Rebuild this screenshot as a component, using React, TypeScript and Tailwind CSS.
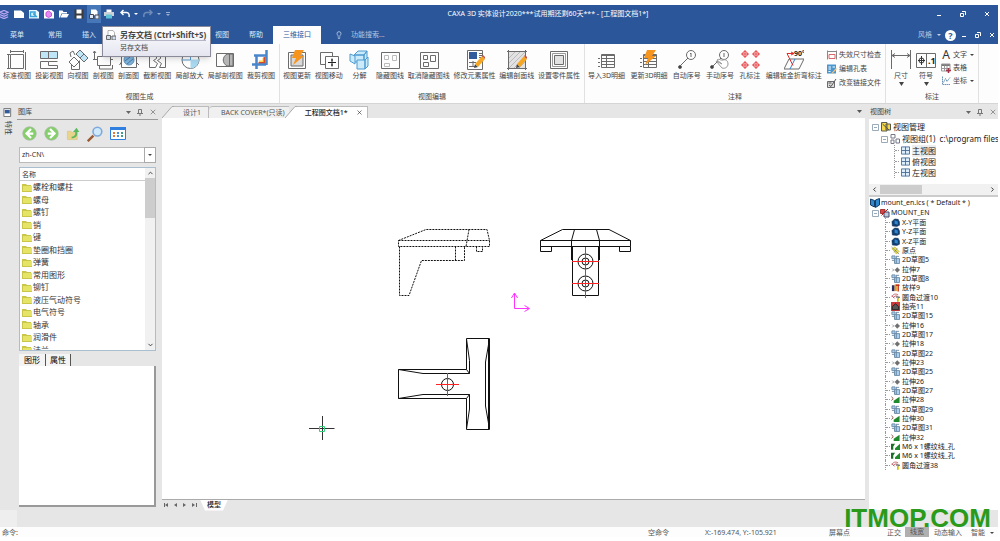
import React from 'react';
import { ChevronDown, ChevronLeft, ChevronRight, ChevronUp, Lightbulb, X } from 'lucide-react';

interface IconProps {
  children: React.ReactNode;
  className?: string;
}

const Icon: React.FC<IconProps> = ({ children, className = 'size-5' }) => (
  <svg viewBox="0 0 20 20" fill="none" stroke="#6b6b6b" className={`shrink-0 ${className}`} aria-hidden="true">
    {children}
  </svg>
);

const Bolt = () => <path d="M8 0h9l-4 6h4L6 15l3-7H5z" fill="#f7941d" stroke="none" />;
const Pencil = () => (
  <g stroke="none">
    <path d="M9 18l1-4 3 3z" fill="#444" />
    <path d="M10 14l7-8 3 3-7 8z" fill="#f5a623" />
    <path d="M17 6l1-1 3 3-1 1z" fill="#c0504d" />
  </g>
);

interface Tool {
  label: string;
  icon: React.ReactNode;
  wide?: boolean;
}

const viewTools: Tool[] = [
  { label: '标准视图', icon: <path d="M3.500 4.500h13v14h-13zM3.500 1.500h13M3.500 0v3M16.500 0v3M0 4.500h3M0 18.500h3M1.500 4v15M18.500 2v18" /> },
  {
    label: '投影视图',
    icon: <><path d="M1.500 1.500h8v7h-8zM9.500 1.500h9v7h-9z" fill="#bfe6f7" /><path d="M1.500 11.500h8v4h9v3h-17zM9.500 11.500h9" /></>,
  },
  {
    label: '向视图',
    icon: <><path d="M8 4l4-4 8 8-4 4z" fill="#bfe6f7" /><path d="M12 8l4-4M1 12l5-5 5 5-5 5zM3.500 14.500v5h8v-9M2 3l3-2 2 4M2 3l1 4" /></>,
  },
  { label: '剖视图', icon: <path d="M4.500 6.500h13v9h-13zM0 9.500h4M17 9.500h3M1.500 1v8M0 3l1.500-2L3 3M6.500 15v4h13v-4" /> },
  {
    label: '剖面图',
    icon: <><path d="M2.500 2.500h15v15h-15zM2.500 12l-2 3M17 12l3 3" /><circle cx="10" cy="10" r="5" fill="#7fb4dc" stroke="#5f8fb9" /><path d="M6 11l5-4M8 14l6-5" stroke="#4c7ba6" /></>,
  },
  { label: '截断视图', icon: <path d="M2.500 3.500h7v5l-3 2 4 3-2 4h-6zM18.500 3.500h-5v5l-3 2 4 3-2 4h6z" /> },
  {
    label: '局部放大',
    icon: <><circle cx="10.500" cy="10" r="8.500" fill="#fff" /><path d="M10.500 1.500v17a8.500 8.500 0 008.500-9h-8.500z" fill="#a9d8f1" stroke="none" /><path d="M10.500 2v8H2M0 5h5" stroke="#5a9bd0" /></>,
  },
  {
    label: '局部剖视图',
    icon: <><path d="M1.500 3.500h17v13h-17z" /><path d="M18 4v12h-6c-5-3-5-9 0-12z" fill="#b5b5b5" /><path d="M14.500 4v12" /></>,
  },
  {
    label: '裁剪视图',
    icon: <><path d="M8 11.500h4.500V8" stroke="#ffd24d" strokeWidth="2" /><path d="M7.500 13h6V7" stroke="#d94a2b" strokeWidth="2" /><path d="M3 5.500h13M5.500 5v14M15.500 0v15M1 14.500h14" stroke="#4a86cc" strokeWidth="2.500" /></>,
  },
];

const editTools: Tool[] = [
  { label: '视图更新', icon: <><path d="M1.500 2.500h17v16h-17z" /><path d="M4 5h12v11H4z" fill="#d8d8d8" /><Bolt /></> },
  { label: '视图移动', icon: <><path d="M1.500 2.500h12v12h-12z" /><path d="M6.500 6.500h13v12h-13z" fill="#fff" /><path d="M13 8.500v8M9 12.500h8M12 10h2M12 15h2" stroke="#222" /></> },
  {
    label: '分解',
    wide: true,
    icon: <g stroke="#4b9bd0" fill="#cbeafa"><path d="M5 5l4-4h9l-3 4zM15 5l3-4v8l-3 3zM5 5h10v7H5z" /><path d="M1 4l5 2v8l-5-3zM8 10h8v9H8zM16 10l3-3v9l-3 3z" /></g>,
  },
  { label: '隐藏图线', icon: <><path d="M1.500 2.500h18v16h-18z" /><path d="M4.500 5.500h4v4h-4zM12.500 5.500h4v5h-4zM4.500 13.500h5v3h-5z" stroke="#bbb" /></> },
  { label: '取消隐藏图线', icon: <><path d="M1.500 2.500h18v16h-18z" /><path d="M4.500 5.500h4v4h-4zM11.500 5.500h5v6h-5zM4.500 12.500h5v4h-5z" /></> },
  {
    label: '修改元素属性',
    icon: <><path d="M2.500.5h15v19h-15z" /><path d="M4 2h8v7H4z" fill="#315b9a" stroke="none" /><path d="M14 3.500h3M14 5.500h3M14 7.500h3M4 12.500h7M4 16.500h6M8 11v6" /><Pencil /></>,
  },
  {
    label: '编辑剖面线',
    icon: <><path d="M1.500 1.500h17v17h-17z" fill="#e2e2e2" /><path d="M2 8l6-6M2 13L13 2M2 18L18 2M7 18L18 7M12 18l6-6" stroke="#bbb" /><path d="M0 1.500h20M1.500 0v20M0 18.500h20M18.500 0v20" /><Pencil /></>,
  },
  { label: '设置零件属性', icon: <><path d="M1.500 1.500h17v17h-17z" /><path d="M3.500 3.500h13v13h-13z" stroke="#999" /><path d="M5.500 5.500h9v9h-9z" fill="#e2e2e2" /></> },
];

const TableLines = () => <path d="M4.500 4.500h13v13h-13zM4 8.500h14M4 11.500h14M4 14.500h14M9.500 5v13M1 8.500h2M1 12.500h2M1 16.500h2M4 5.500h13" />;

const noteTools: Tool[] = [
  { label: '导入3D明细', icon: <TableLines /> },
  { label: '更新3D明细', icon: <><TableLines /><Bolt /></> },
  { label: '自动序号', icon: <><circle cx="14" cy="5" r="4.500" /><path d="M11 8l-8 8M14 3v4M13 4l1-1" /><circle cx="3" cy="17" r="1.500" fill="#333" /></> },
  {
    label: '手动序号',
    icon: <><circle cx="14" cy="5" r="4.500" /><path d="M11 8l-8 8M14 3v4" /><circle cx="2" cy="17" r="1.500" fill="#333" /><path d="M6 11l6 3-5-4c2-2 4 1 6 0 3-1 5 1 5 4s-3 5-6 4z" fill="#fff" stroke="#999" /></>,
  },
  {
    label: '孔标注',
    icon: (
      <g stroke="#e8484c">
        {[[5, 4], [16, 4], [5, 15], [16, 15]].map(([x, y]) => (
          <g key={`${x}-${y}`}><circle cx={x} cy={y} r="2.500" /><path d={`M${x - 4} ${y}h8M${x} ${y - 4}v8`} /></g>
        ))}
      </g>
    ),
  },
  {
    label: '编辑钣金折弯标注',
    icon: (
      <>
        <path d="M5 9h15l-5 10H0z" />
        <path d="M11 9L6 19" stroke="#2f80d8" />
        <path d="M10 3.500H3l6 12M7 2l3 1.500L7 5" stroke="#e02b2b" />
        <text x="10" y="6" fontSize="7" fontWeight="700" fill="#222" stroke="none">90°</text>
      </>
    ),
  },
];

const categories = ['螺栓和螺柱', '螺母', '螺钉', '销', '键', '垫圈和挡圈', '弹簧', '常用图形', '铆钉', '液压气动符号', '电气符号', '轴承', '润滑件', '法兰'];

type NodeKind = 'plane' | 'origin' | 'sketch' | 'extrude' | 'loft' | 'fillet' | 'shell' | 'cut' | 'thread';

const features: { name: string; kind: NodeKind }[] = [
  { name: 'X-Y平面', kind: 'plane' },
  { name: 'Y-Z平面', kind: 'plane' },
  { name: 'X-Z平面', kind: 'plane' },
  { name: '原点', kind: 'origin' },
  { name: '2D草图5', kind: 'sketch' },
  { name: '拉伸7', kind: 'extrude' },
  { name: '2D草图8', kind: 'sketch' },
  { name: '放样9', kind: 'loft' },
  { name: '圆角过渡10', kind: 'fillet' },
  { name: '抽壳11', kind: 'shell' },
  { name: '2D草图15', kind: 'sketch' },
  { name: '拉伸16', kind: 'extrude' },
  { name: '2D草图17', kind: 'sketch' },
  { name: '拉伸18', kind: 'extrude' },
  { name: '2D草图22', kind: 'sketch' },
  { name: '拉伸23', kind: 'extrude' },
  { name: '2D草图25', kind: 'sketch' },
  { name: '拉伸26', kind: 'extrude' },
  { name: '2D草图27', kind: 'sketch' },
  { name: '拉伸28', kind: 'cut' },
  { name: '2D草图29', kind: 'sketch' },
  { name: '拉伸30', kind: 'cut' },
  { name: '2D草图31', kind: 'sketch' },
  { name: '拉伸32', kind: 'cut' },
  { name: 'M6 x 1螺纹线_孔', kind: 'thread' },
  { name: 'M6 x 1螺纹线_孔', kind: 'thread' },
  { name: '圆角过渡38', kind: 'fillet' },
];

const nodeShapes: Record<NodeKind, React.ReactNode> = {
  plane: <><path d="M2 8l6-6 8 1 3 6v7l-6 3-10-1z" fill="#123f70" stroke="#0b2c52" /><path d="M8 5l7 3v7l-7-2z" fill="#2f87d0" stroke="none" /></>,
  origin: <><path d="M2 6l7-4 9 10-6 6z" fill="#e8e04a" stroke="#a39b1d" /><path d="M1 2l17 16M14 5l-7 9" stroke="#777" strokeWidth="1.500" /></>,
  sketch: <><path d="M2 2h7v6H2zM8 8h11v11H8z" fill="#a9d0ee" stroke="#6b8aa5" strokeWidth="2" /><path d="M12 2v16M2 12h6v6M12 3h6" stroke="#6b8aa5" strokeWidth="2" /></>,
  extrude: <><circle cx="14" cy="11" r="3.500" fill="#888" stroke="#666" strokeWidth="2" /><path d="M3 8l3 3-3 3M14 5v12M8 11h12" stroke="#666" strokeWidth="1.500" /></>,
  loft: <><path d="M2 5h6v13H2z" fill="#2b2b63" stroke="none" /><path d="M8 3h5v15H8z" fill="#e39a1e" stroke="none" /><path d="M16 3v16M11 5h8" stroke="#c32b1d" strokeWidth="3" /></>,
  fillet: <><path d="M2 9c2-7 8-8 14-5M5 11c2-5 6-5 10-4M2 6l6 6" stroke="#c05b64" strokeWidth="2" /><path d="M11 9h8l-4 4v6" stroke="#333" strokeWidth="2" /><path d="M14 12h4v7h-4z" fill="#e9d52e" stroke="none" /></>,
  shell: <><path d="M0 0h20v20H0z" fill="#c83a3a" stroke="none" /><path d="M3 17v-7l7-6 7 6v7z" fill="#555" stroke="#222" strokeWidth="2" /></>,
  cut: <><path d="M6 18v-5L19 4v14z" fill="#1f8a2b" stroke="none" /><path d="M1 4l4 4-4 4" stroke="#7a3b26" strokeWidth="2" /></>,
  thread: <><path d="M0 4h9l-4 6v7H0z" fill="#1b6e26" stroke="none" /><path d="M9 18v-4L20 4v14z" fill="#1f8a2b" stroke="none" /></>,
};

const ToolButton: React.FC<{ tool: Tool }> = ({ tool }) => (
  <button className={`flex flex-col items-center gap-px whitespace-nowrap ${tool.wide ? 'px-[3px]' : ''}`}>
    <Icon>{tool.icon}</Icon>
    <span className="leading-[10px]">{tool.label}</span>
  </button>
);

const RibbonGroup: React.FC<{ title: string; children: React.ReactNode }> = ({ title, children }) => (
  <section className="flex min-w-0 flex-col border-r border-[#e1e1e1]">
    <div className="flex flex-1 items-start justify-between pt-[6px] pr-1 pl-[3px]">{children}</div>
    <h2 className="pb-px text-center leading-[10px]">{title}</h2>
  </section>
);

const PanelHeader: React.FC<{ title: string }> = ({ title }) => (
  <header className="flex h-[14px] shrink-0 items-center gap-[6px] pr-px text-[#444]">
    <h2 className="flex-1 pl-px">{title}</h2>
    <button aria-label="选项"><svg viewBox="0 0 5 3" className="h-[3px] w-[5px]"><path d="M0 0h5L2.500 3z" fill="#666" /></svg></button>
    <button aria-label="固定"><svg viewBox="0 0 6 7" className="h-[7px] w-[6px]" fill="none" stroke="#777"><path d="M1.500 4V.5h3V4M0 4.500h6M3 4.500V7" /></svg></button>
    <button aria-label="关闭"><X className="size-2 text-[#666]" strokeWidth={2} /></button>
  </header>
);

const WindowButtons: React.FC<{ className: string }> = ({ className }) => (
  <div className={`flex items-center ${className}`}>
    <button aria-label="最小化"><svg viewBox="0 0 6 6" className="size-[6px]"><path d="M1 4h4v1H1z" fill="#fff" /></svg></button>
    <button aria-label="还原"><svg viewBox="0 0 6 6" className="size-[6px]" fill="none" stroke="#fff"><path d="M.5 2.500h3v3h-3zM2 .5h3.500V4" /></svg></button>
    <button aria-label="关闭"><svg viewBox="0 0 6 6" className="size-[6px]" stroke="#fff"><path d="M1 1l4 4M5 1L1 5" /></svg></button>
  </div>
);

const QuickAccess = () => (
  <div className="flex items-center">
    <button aria-label="应用程序" className="mr-[5px]">
      <Icon className="size-[9px]"><path d="M0 5l9-4 9 4-9 4zM0 10l9 4 9-4M0 15l9 4 9-4" stroke="#b9a5f5" strokeWidth="3" /></Icon>
    </button>
    <div className="flex items-center gap-[5px]">
      <button aria-label="新建"><Icon className="size-[10px]"><path d="M0 3h14l6 5v10H0z" fill="#fff" stroke="none" /></Icon></button>
      <button aria-label="新建工程图"><Icon className="size-[10px]"><path d="M0 2h15l5 4v13H0z" fill="#e9f8ff" stroke="none" /><path d="M3 6h9v9H3zM8 9l8 7" stroke="#3aa3d8" strokeWidth="3" /></Icon></button>
      <button aria-label="新建零件"><Icon className="size-[10px]"><path d="M0 2h15l5 4v13H0z" fill="#fff" stroke="none" /><path d="M4 7l5-3 6 4v6l-6 3-5-3z" fill="#e48cf0" stroke="#c653dd" strokeWidth="2" /></Icon></button>
      <button aria-label="打开"><Icon className="size-[10px]"><path d="M0 3h7l2 3h7v3H5L2 17H0z" fill="#fff" stroke="none" /><path d="M6 10h14l-4 7H3z" fill="#fff" stroke="none" /></Icon></button>
      <button aria-label="保存"><Icon className="size-[10px]"><path d="M1 1h18v18H1z" fill="#3b3b3b" stroke="none" /><path d="M5 1h10v8H5zM5 13h10v6H5z" fill="#fff" stroke="none" /></Icon></button>
    </div>
    <button aria-label="另存文档" className="mx-[3px] flex h-[18px] w-[14px] items-center justify-center bg-[#4677b8]">
      <Icon className="size-[10px]"><path d="M4 1h10l3 4v8H4z" fill="#fff" stroke="none" /><path d="M1 11h8v8H1zM12 12h8v8h-8z" fill="#dde9f5" stroke="#445" strokeWidth="2" /></Icon>
    </button>
    <button aria-label="打印"><Icon className="size-[10px]"><path d="M5 1h10v6H5z" fill="#fff" stroke="none" /><path d="M0 6h20v8H0z" fill="#ccd3d8" stroke="none" /><path d="M4 11h12v8H4z" fill="#5fc4d8" stroke="none" /></Icon></button>
    <button aria-label="撤销" className="ml-[6px] flex items-center gap-1">
      <Icon className="size-[10px]"><path d="M7 2L2 7l5 5M2 7h11c5 0 6 5 5 9" stroke="#fff" strokeWidth="3" /></Icon>
      <svg viewBox="0 0 4 2" className="h-[2px] w-1"><path d="M0 0h4L2 2z" fill="#fff" /></svg>
    </button>
    <button aria-label="重做" className="ml-[5px] flex items-center gap-1">
      <Icon className="size-[10px]"><path d="M13 2l5 5-5 5M18 7H7C2 7 1 12 2 16" stroke="#6f8cb8" strokeWidth="3" /></Icon>
      <svg viewBox="0 0 4 2" className="h-[2px] w-1"><path d="M0 0h4L2 2z" fill="#9ab0d2" /></svg>
    </button>
    <button aria-label="自定义" className="ml-[5px]"><svg viewBox="0 0 4 4" className="size-1"><path d="M0 0h4v1H0zM0 2h4L2 4z" fill="#9ab0d2" /></svg></button>
  </div>
);

const Ribbon = () => (
  <div className="grid h-[60px] shrink-0 grid-cols-[280fr_305fr_301fr_93fr_19fr] border-b border-[#d5d5d5] bg-[#fdfdfd] text-[#444]">
    <RibbonGroup title="视图生成">{viewTools.map(t => <ToolButton key={t.label} tool={t} />)}</RibbonGroup>
    <RibbonGroup title="视图编辑">{editTools.map(t => <ToolButton key={t.label} tool={t} />)}</RibbonGroup>
    <RibbonGroup title="注释">
      {noteTools.map(t => <ToolButton key={t.label} tool={t} />)}
      <div className="flex flex-col gap-1">
        <button className="flex items-center gap-[2px] leading-[10px]">
          <Icon className="size-[10px]"><path d="M1 1v18M19 1v18M1 3h18" stroke="#888" strokeWidth="2" /><path d="M4 9h12v8H4z" stroke="#d66" strokeWidth="2" /></Icon>
          失效尺寸检查
        </button>
        <button className="flex items-center gap-[2px] leading-[10px]">
          <Icon className="size-[10px]"><path d="M0 1h18v18H0z" fill="#4a97d0" stroke="none" /><path d="M3 6h5M3 10h5M11 6h5M3 15h4" stroke="#fff" strokeWidth="2" /><path d="M9 18l9-10 2 2-9 9z" fill="#f3c27a" stroke="none" /></Icon>
          编辑孔表
        </button>
        <button className="flex items-center gap-[2px] leading-[10px]">
          <Icon className="size-[10px]"><path d="M1 7h14v12H1z" fill="#ddd" strokeWidth="2" /><path d="M4 14l4 3 10-15M3 10h6" stroke="#555" strokeWidth="2" /></Icon>
          改变链接文件
        </button>
      </div>
    </RibbonGroup>
    <RibbonGroup title="标注">
      <button className="flex flex-col items-center pl-[2px]">
        <Icon><path d="M.5 0v19M19.500 0v19M1 5.500h18M4 3.500l-3 2 3 2M16 3.500l3 2-3 2" /></Icon>
        <span className="mt-px leading-[10px]">尺寸</span>
        <svg viewBox="0 0 5 4" className="mt-px h-1 w-[5px]"><path d="M0 0h5L2.500 4z" fill="#444" /></svg>
      </button>
      <button className="flex flex-col items-center">
        <Icon><path d="M.5 3.500h19v14H.5zM10.500 3v15" /><circle cx="5.500" cy="10.500" r="2.500" stroke="#333" /><path d="M5.500 6v9M2 10.500h7" stroke="#333" /><text x="12" y="14" fontSize="9" fontWeight="700" fill="#222" stroke="none">.1</text></Icon>
        <span className="mt-px leading-[10px]">符号</span>
        <svg viewBox="0 0 5 4" className="mt-px h-1 w-[5px]"><path d="M0 0h5L2.500 4z" fill="#444" /></svg>
      </button>
      <div className="flex flex-col gap-[3px]">
        <button className="flex items-center gap-[2px] leading-[10px]">
          <span className="w-[10px] text-center text-[12px] leading-[10px] text-[#333]">A</span>文字
          <svg viewBox="0 0 4 2" className="ml-px h-[2px] w-1"><path d="M0 0h4L2 2z" fill="#444" /></svg>
        </button>
        <button className="flex items-center gap-[2px] leading-[10px]">
          <Icon className="size-[10px]"><path d="M0 2h18v4H0z" fill="#777" stroke="none" /><path d="M1 2h17v14H1zM1 11h17M7 5v11M12 5v11" stroke="#999" strokeWidth="2" /><path d="M15 10v10M10 15h10" stroke="#a33048" strokeWidth="3" /></Icon>
          表格
        </button>
        <button className="flex items-center gap-[2px] leading-[10px]">
          <Icon className="size-[10px]"><path d="M3 1v16h16M5 13l4-8 3 6 6-8" stroke="#6d94b8" strokeWidth="2" strokeDasharray="3 1" /></Icon>
          坐标
          <svg viewBox="0 0 4 2" className="ml-px h-[2px] w-1"><path d="M0 0h4L2 2z" fill="#444" /></svg>
        </button>
      </div>
    </RibbonGroup>
  </div>
);

const LibraryPanel = () => (
  <aside className="flex w-[141px] shrink-0 flex-col">
    <PanelHeader title="图库" />
    <div className="flex h-[28px] shrink-0 items-center gap-[7px] border-t border-[#999] pl-[5px]">
      {['M12 4l-6 6 6 6M6 10h9', 'M8 4l6 6-6 6M14 10H5'].map((d, i) => (
        <button key={d} aria-label={i === 0 ? '后退' : '前进'}>
          <Icon className="size-[15px]"><circle cx="10" cy="10" r="9" fill="#84cf6b" stroke="#a9b9a3" /><path d={d} stroke="#fff" strokeWidth="3" /></Icon>
        </button>
      ))}
      <button aria-label="上一级"><Icon className="size-[14px]"><path d="M2 6h5l2 2h7v10H2z" fill="#e8d48a" stroke="#d8c68a" /><path d="M8 14c5-1 6-4 5-7h-3l5-6 4 6h-3c1 5-2 9-8 9z" fill="#5cb85c" stroke="none" /></Icon></button>
      <button aria-label="查找"><Icon className="size-[16px]"><path d="M8 12l-7 7" stroke="#9b5a32" strokeWidth="3" /><circle cx="13" cy="7" r="5.500" fill="#cfe9fb" stroke="#7fa9dc" strokeWidth="2" /></Icon></button>
      <button aria-label="视图方式">
        <svg viewBox="0 0 16 13" className="h-[13px] w-4"><path d="M.5.5h15v12H.5z" fill="#fff" stroke="#2f7fe0" /><path d="M0 0h16v3H0z" fill="#2f7fe0" /><path d="M3 5h2v2H3zM3 8h2v2H3z" fill="#e07b39" /><path d="M7 5h2v2H7zM7 8h2v2H7z" fill="#4a90d9" /><path d="M11 5h2v2h-2zM11 8h2v2h-2z" fill="#3e9e8a" /></svg>
      </button>
    </div>
    <div className="relative mr-[2px] ml-[2px] shrink-0">
      <select aria-label="路径" className="block h-4 w-full appearance-none rounded-none border border-[#bbb] bg-white pl-[2px] text-[#333]">
        <option>zh-CN\</option>
      </select>
      <span className="pointer-events-none absolute inset-y-0 right-0 flex w-3 items-center justify-center border border-[#aaa]">
        <svg viewBox="0 0 4 2" className="h-[2px] w-1"><path d="M0 0h4L2 2z" fill="#444" /></svg>
      </span>
    </div>
    <div className="mt-1 mr-[2px] ml-[2px] flex flex-[184] overflow-hidden border border-[#a9bfd0] bg-white text-[8px] text-[#333]">
      <div className="min-h-0 flex-1">
        <div className="h-[13px] border-b border-[#ccc] pl-[2px] text-[7px] leading-[13px]">名称</div>
        <ul>
          {categories.map(name => (
            <li key={name} className="flex items-center gap-px pl-[2px] leading-[12px] odd:h-[12px] even:h-[13px]">
              <svg viewBox="0 0 10 9" className="h-[9px] w-[10px]"><path d="M0 1h4l1 1h4v2h1v5H0z" fill="#c9c64a" /><path d="M1 3h9v5H1z" fill="#e6e467" /></svg>
              {name}
            </li>
          ))}
        </ul>
      </div>
      <div className="flex w-[10px] flex-col items-center justify-between bg-[#f1f1f1]">
        <div className="w-full">
          <ChevronUp className="mx-auto h-[10px] w-[7px]" strokeWidth={3} />
          <div className="h-10 bg-[#cdcdcd]" />
        </div>
        <ChevronDown className="h-[10px] w-[7px]" strokeWidth={3} />
      </div>
    </div>
    <div className="mt-[3px] ml-[2px] flex shrink-0 text-[8px] leading-[12px] text-black">
      <button className="bg-[#f4f4f4] px-[5px]">图形</button>
      <button className="border-r border-l border-[#555] bg-[#f4f4f4] px-1">属性</button>
    </div>
    <div className="mr-[2px] mb-[3px] ml-[2px] flex-[141] border-r-2 border-b-2 border-[#999] bg-white" />
  </aside>
);

const Drawing = () => (
  <svg viewBox="162 118 703 381" className="min-h-0 w-full flex-1 bg-white" fill="none" stroke="#111">
    <g strokeDasharray="2 1">
      <path d="M398.500 240.500L426 229.500H487L489.500 240.500V246.500H398.500zM398.500 240.500H489.500M469 229.500L466 246.500" />
      <path d="M476.500 246.500V251.500H482.500V246.500M399.500 246.500V295.500H409L421.500 260.500H464.500V246.500M455.500 246.500V260.500" />
    </g>
    <path d="M540.500 240.500L562.500 229.500H609L630.500 240.500V246.500H540.500zM540.500 240.500H630.500M574.500 229.500L571.500 240.500V260M596.500 229.500L599.500 240.500V260" />
    <path d="M540.500 246.500V251.500H551.500V246.500M619.500 246.500V251.500H630.500V246.500M572.500 246.500V295.500H598.500V246.500" />
    {[261.5, 283.5].map(y => (
      <g key={y}>
        <circle cx="585.5" cy={y} r="7.5" />
        <circle cx="585.5" cy={y} r="3.5" />
        <path d={`M572 ${y}H599`} stroke="#f22" />
      </g>
    ))}
    <path d="M585.500 247V298" stroke="#f22" />
    <path d="M514.500 293V308.500H529M511.500 298L514.500 293L517.500 298M524.500 305.500L529.500 308.500L524.500 311.500" stroke="#f3f" />
    <path d="M398.500 369.500H466.500V338.500H489.500V429.500H466.500V398.500H398.500z" />
    <path d="M398.500 369.500L423 373.500H469.500L466.500 369.500M469.500 373.500V360.500L466.500 339M398.500 398.500L423 394.500H469.500L466.500 398.500M469.500 394.500V409L466.500 429M489.500 339L485.500 362V406L489.500 429M488.500 339V429" />
    <circle cx="447.500" cy="384.500" r="6" />
    <path d="M436 384.500H459M447.500 373V396" stroke="#f22" />
    <path d="M309 428.500H334.500M322.500 416V440" stroke="#333" />
    <path d="M319.500 426.500H324.500V431.500H319.500z" stroke="#2fcf7a" />
  </svg>
);

// Slanted left edge of a document tab
const Slant: React.FC<{ fill: string }> = ({ fill }) => (
  <svg viewBox="0 0 12 12" className="h-3 w-3 shrink-0"><path d="M0 12L10 .5h2V12z" fill={fill} /><path d="M0 12L10 .5h2" fill="none" stroke="#aaa" /></svg>
);

const Workspace = () => (
  <main className="flex min-w-0 flex-1 flex-col">
    <nav className="flex h-[13px] shrink-0 items-end text-[#555]">
      <button className="flex h-3 items-center">
        <Slant fill="#f0f0f0" />
        <span className="flex h-3 items-center border-t border-r border-[#bbb] bg-[#f0f0f0] pr-[7px] pl-[9px]">设计1</span>
      </button>
      <button className="-mr-1 flex h-3 items-center rounded-tl-sm border-t border-[#bbb] bg-[#f0f0f0] pr-1 pl-3">BACK COVER*(只读)</button>
      <div className="flex h-3 items-center font-medium text-[#222]">
        <Slant fill="#fff" />
        <div className="flex h-3 items-center border-t border-r border-[#bbb] bg-white pr-1 pl-2">
          <button>工程图文档1*</button>
          <button aria-label="关闭文档" className="ml-2"><X className="size-[7px]" strokeWidth={2} /></button>
        </div>
      </div>
      <button aria-label="文档列表" className="mr-[3px] mb-[5px] ml-auto"><svg viewBox="0 0 5 3" className="h-[3px] w-[5px]"><path d="M0 0h5L2.500 3z" fill="#555" /></svg></button>
    </nav>
    <Drawing />
    <div className="flex h-[11px] shrink-0 items-center border-t border-[#aaa] text-[#222]">
      <svg viewBox="0 0 36 6" className="mx-px h-[6px] w-9" fill="#666"><path d="M1 1h1v4H1zM5 1v4L2 3zM14 1v4l-3-2zM20 1v4l3-2zM29 1v4l3-2zM33 1h1v4h-1z" /></svg>
      <button className="flex h-[11px] items-center bg-white px-[7px] font-medium [clip-path:polygon(0_0,100%_0,calc(100%-5px)_100%,5px_100%)]">模型</button>
    </div>
  </main>
);

const Toggle = () => (
  <svg viewBox="0 0 7 7" className="size-[7px] shrink-0 bg-white" fill="none" stroke="#9ab"><path d="M.5.5h6v6h-6zM2 3.500h3" /></svg>
);

const TreePanel = () => (
  <aside className="flex w-[129px] shrink-0 flex-col">
    <PanelHeader title="视图树" />
    <div className="flex min-h-0 flex-1 flex-col overflow-hidden bg-white text-[#222]">
      <ul className="shrink-0 overflow-hidden pt-[2px] pl-[3px] text-[8px] leading-[12px] whitespace-nowrap">
        <li className="flex items-center gap-[2px]">
          <Toggle />
          <Icon className="size-[10px]"><path d="M1 1h11v17H1zM10 4h9v12h-9z" fill="#f5d94a" stroke="#5c5c50" strokeWidth="2" /><path d="M3 4l13 12" stroke="#555" strokeWidth="2" /></Icon>
          视图管理
        </li>
        <li className="flex items-center gap-[2px] pl-[9px]">
          <Toggle />
          <Icon className="size-[10px]"><path d="M2 1h8v7H2zM2 12h6v7H2zM12 10h7v8h-7z" stroke="#778" strokeWidth="2" /></Icon>
          视图组(1)&nbsp; c:\program files
        </li>
        {['主视图', '俯视图', '左视图'].map((name, i) => (
          <li key={name} className="ml-[22px] flex h-[11px] items-center gap-[2px] border-l border-dotted border-[#999]">
            <span className="w-1 border-t border-dotted border-[#999]" />
            <Icon className="size-[9px]"><path d="M1 2h18v16H1zM10 2v16M1 10h18" fill="#dceefb" stroke="#456b94" strokeWidth="2" /></Icon>
            <span className={i === 0 ? 'bg-[#eee]' : ''}>{name}</span>
          </li>
        ))}
      </ul>
      <div className="mt-[6px] flex h-[11px] shrink-0 items-center bg-[#f1f1f1] px-[2px]">
        <ChevronLeft className="size-[7px]" strokeWidth={3} />
        <div className="ml-[2px] h-[9px] w-[42px] bg-[#cdcdcd]" />
        <ChevronRight className="ml-auto size-[7px]" strokeWidth={3} />
      </div>
      <div className="min-h-0 flex-1 overflow-hidden border-t-2 border-[#ccc] pt-px whitespace-nowrap">
        <div className="flex h-[10px] items-center gap-px pl-px">
          <Icon className="size-[10px]"><path d="M1 2l8 3v13l-8-4zM11 4l8-3v13l-8 5z" fill="#2f87d0" stroke="#153d66" strokeWidth="2" /></Icon>
          mount_en.ics ( * Default * )
        </div>
        <div className="flex h-[10px] items-center gap-px pl-[3px]">
          <Toggle />
          <Icon className="size-[10px]"><path d="M1 3h9v8H1z" fill="#d84545" stroke="#a33" strokeWidth="2" /><path d="M8 8h10v10H8z" fill="#bcd" stroke="#446" strokeWidth="2" /><path d="M3 15L16 2" stroke="#a22" strokeWidth="2" /></Icon>
          MOUNT_EN
        </div>
        <ul className="ml-4">
          {features.map((f, i) => (
            <li key={i} className="flex h-[9px] items-center gap-[2px] border-l border-dotted border-[#999] nth-[3n]:h-[10px]">
              <span className="-mr-px w-1 border-t border-dotted border-[#999]" />
              <Icon className="size-[9px]">{nodeShapes[f.kind]}</Icon>
              <span className="leading-[9px]">{f.name}</span>
            </li>
          ))}
        </ul>
      </div>
    </div>
  </aside>
);

export default function App() {
  return (
    <div className="flex h-screen flex-col overflow-hidden bg-white pt-[5px] pr-[2px] pb-1 font-['Noto_Sans','Noto_Sans_CJK_SC',sans-serif] text-[7px] leading-[10px]">
      {/* Title bar and menu */}
      <header className="relative shrink-0 bg-[#2b579a] text-[#dfe8f5]">
        <div className="grid h-[21px] grid-cols-[1fr_auto_1fr] items-center pb-[3px]">
          <QuickAccess />
          <h1 className="ml-[98px] text-white">CAXA 3D 实体设计2020***试用期还剩60天*** - [工程图文档1*]</h1>
          <WindowButtons className="justify-end gap-[18px] pr-2" />
        </div>
        <nav className="flex h-[18px] items-center">
          <button className="w-[34px]">菜单</button>
          <button className="ml-1 w-[34px]">常用</button>
          <button className="w-[34px]">插入</button>
          <button className="ml-[99px] w-[34px]">视图</button>
          <button className="w-[34px]">帮助</button>
          <button className="h-full w-12 bg-[#fdfdfd] text-[#2b579a]">三维接口</button>
          <label className="ml-[14px] flex items-center gap-2">
            <Lightbulb className="size-2" strokeWidth={2} />
            <input aria-label="功能搜索" placeholder="功能搜索..." className="w-20 bg-transparent outline-none placeholder:text-[#b4c5e0]" />
          </label>
          <button className="ml-auto flex items-center gap-[5px] text-[#b4c5e0]">
            风格
            <svg viewBox="0 0 4 2" className="h-[2px] w-1"><path d="M0 0h4L2 2z" fill="#c5d3e8" /></svg>
          </button>
          <button aria-label="帮助主题" className="mr-[5px] ml-1 size-[11px] rounded-full bg-white text-[9px] leading-[11px] font-bold text-[#2b579a]">?</button>
          <WindowButtons className="gap-2 pr-[3px]" />
        </nav>
        {/* Tooltip */}
        <div role="tooltip" className="absolute top-[21px] left-[102px] z-10 border border-[#8a8a9a] bg-gradient-to-b from-white to-[#e4e5f0] py-[2px] pr-1 pl-[3px] whitespace-nowrap text-[#444] shadow-md">
          <div className="flex items-center gap-1 text-[8px] leading-[11px] font-bold">
            <Icon className="size-[10px]"><path d="M4 1h10l3 4v8H4z" fill="#fff" /><path d="M1 11h8v8H1zM12 12h8v8h-8z" fill="#cfdcec" strokeWidth="2" /></Icon>
            另存文档 (Ctrl+Shift+S)
          </div>
          <p className="ml-[14px] border-t border-[#b5b5c5] leading-[13px]">另存文档</p>
        </div>
      </header>

      <Ribbon />

      {/* Panels and drawing area */}
      <div className="flex min-h-0 flex-1 flex-col bg-[#e6e6e6] pt-px">
        <div className="flex min-h-0 flex-1 gap-1">
          <div className="flex min-h-0 shrink-0">
            <div className="flex w-[17px] flex-col items-center gap-1 pt-[3px] pr-[2px] text-[#444]">
              <Icon className="size-[9px]"><path d="M2 1h15v18H2z" fill="#fff" strokeWidth="2" /><path d="M4 4h11v8H4z" fill="#315b9a" stroke="none" /></Icon>
              <span className="[text-orientation:sideways] [writing-mode:vertical-rl]">特性</span>
            </div>
            <LibraryPanel />
          </div>
          <Workspace />
          <TreePanel />
        </div>
        <div className="flex h-[17px] shrink-0 justify-between pr-[7px]">
          <div className="h-full w-[17px] bg-[#eee]" />
          <span className="font-['Liberation_Sans',sans-serif] text-[26px] leading-[17px] font-bold text-[#2a9a1a]">ITMOP.COM</span>
        </div>
      </div>

      {/* Status bar */}
      <footer className="flex h-[10px] shrink-0 items-end bg-[#fdfdfd] leading-[8px] text-[#555]">
        <span className="flex-1 pl-[2px]">命令:</span>
        <span className="w-[57px]">空命令</span>
        <span className="w-[124px]">X:-169.474, Y:-105.921</span>
        <span className="w-[54px]">屏幕点</span>
        <button className="px-1">正交</button>
        <button className="h-full bg-[#b0b0b0] px-[5px] leading-[8px]">线宽</button>
        <button className="px-[5px]">动态输入</button>
        <button className="flex items-center gap-[5px] px-1">智能<svg viewBox="0 0 4 2" className="h-[2px] w-1"><path d="M0 0h4L2 2z" fill="#444" /></svg></button>
      </footer>
    </div>
  );
}
